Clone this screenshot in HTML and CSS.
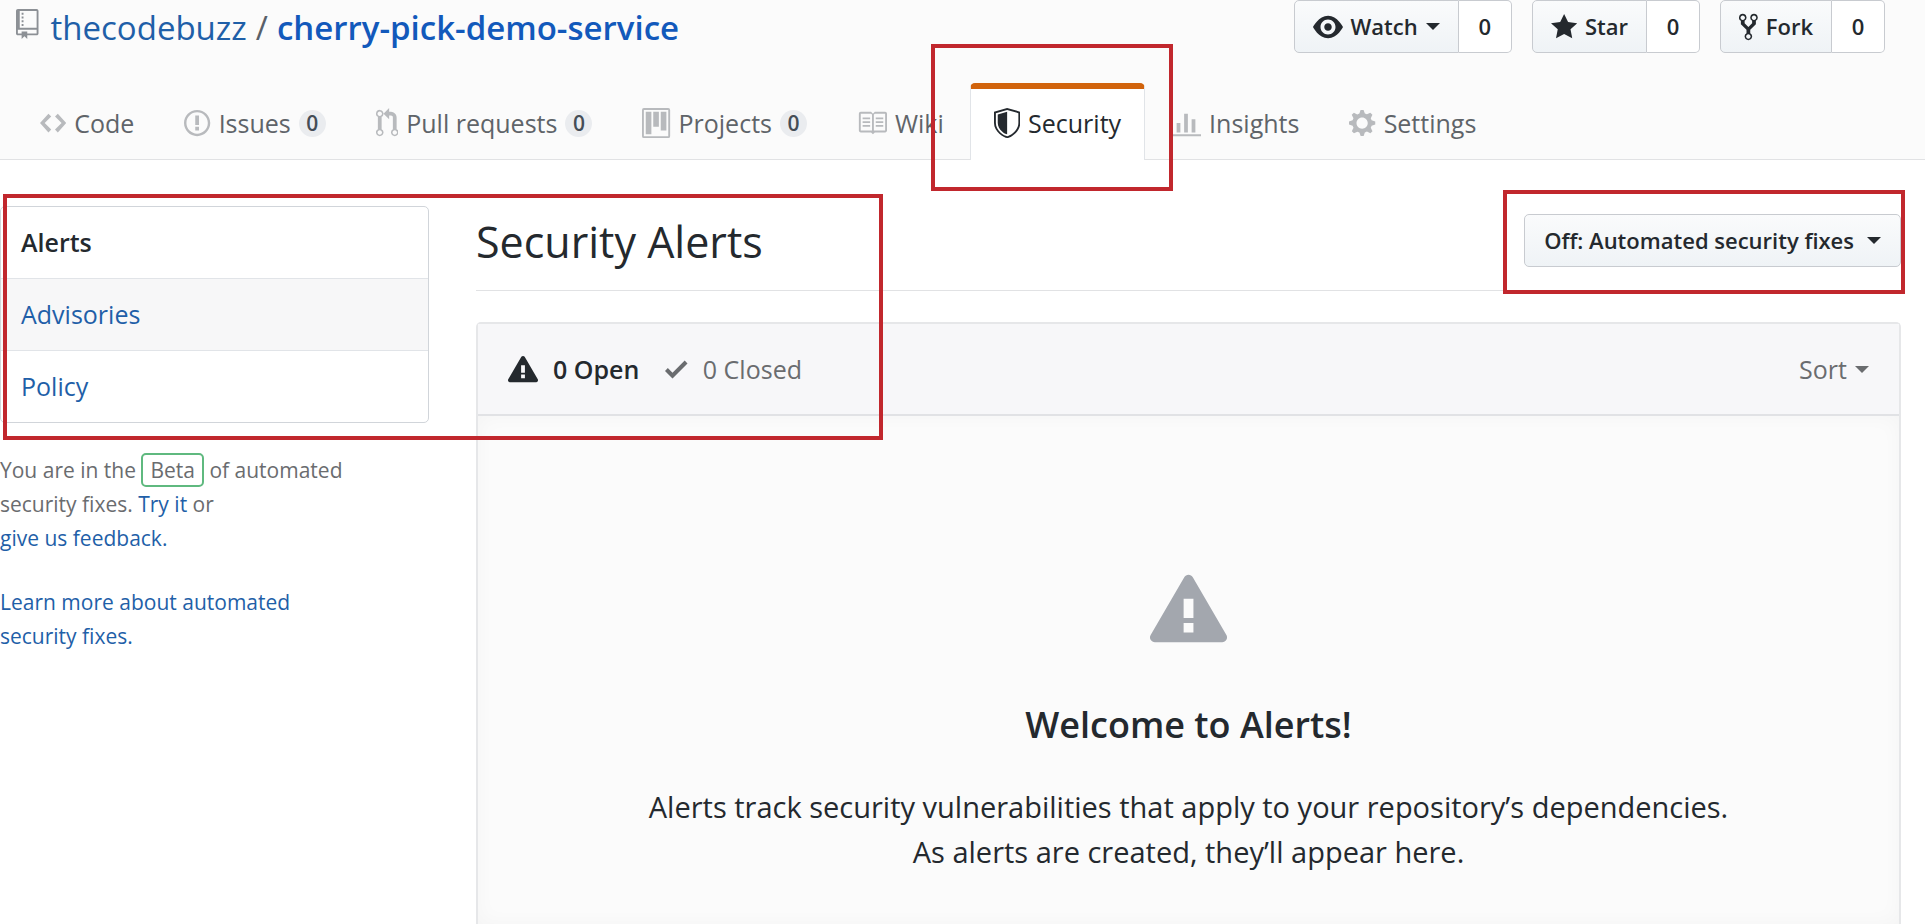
FILE: index.html
```html
<!DOCTYPE html>
<html lang="en">
<head>
<meta charset="utf-8">
<meta name="viewport" content="width=device-width, initial-scale=1">
<title>Security Alerts · thecodebuzz/cherry-pick-demo-service</title>
<link rel="stylesheet" href="styles.css">
</head>
<body>
<header class="repohead">
  <div class="repohead-top">
    <h1 class="repo-title">
      <svg class="icon repo-icon" viewBox="0 0 12 16" aria-hidden="true"><path fill-rule="evenodd" d="M4 9H3V8h1v1zm0-3H3v1h1V6zm0-2H3v1h1V4zm0-2H3v1h1V2zm8-1v12c0 .55-.45 1-1 1H6v2l-1.5-1.500L3 16v-2H1c-.55 0-1-.45-1-1V1c0-.55.45-1 1-1h10c.55 0 1 .45 1 1zm-1 10H1v2h2v-1h3v1h5v-2zm0-10H2v9h9V1z"/></svg>
      <a class="owner" href="#">thecodebuzz</a><span class="slash">/</span><a class="repo" href="#">cherry-pick-demo-service</a>
    </h1>
    <ul class="actions">
      <li class="action">
        <button class="btn" type="button">
          <svg class="icon" viewBox="0 0 16 16" aria-hidden="true"><path fill-rule="evenodd" d="M8.060 2C3 2 0 8 0 8s3 6 8.060 6C13 14 16 8 16 8s-3-6-7.940-6zM8 12c-2.200 0-4-1.780-4-4 0-2.200 1.800-4 4-4 2.220 0 4 1.800 4 4 0 2.220-1.780 4-4 4zm2-4c0 1.110-.89 2-2 2-1.110 0-2-.89-2-2 0-1.110.89-2 2-2 1.110 0 2 .89 2 2z"/></svg>
          Watch<span class="caret"></span>
        </button>
        <a class="count" href="#">0</a>
      </li>
      <li class="action">
        <button class="btn" type="button">
          <svg class="icon" viewBox="0 0 14 16" aria-hidden="true"><path d="M14 6l-4.900-.64L7 1 4.900 5.360 0 6l3.600 3.260L2.670 14 7 11.670 11.330 14l-.93-4.740L14 6z"/></svg>
          Star
        </button>
        <a class="count" href="#">0</a>
      </li>
      <li class="action">
        <button class="btn" type="button">
          <svg class="icon" viewBox="0 0 10 16" aria-hidden="true"><path fill-rule="evenodd" d="M8 1a1.993 1.993 0 0 0-1 3.720V6L5 8 3 6V4.720A1.993 1.993 0 0 0 2 1a1.993 1.993 0 0 0-1 3.720V6.500l3 3v1.780A1.993 1.993 0 0 0 5 15a1.993 1.993 0 0 0 1-3.720V9.500l3-3V4.720A1.993 1.993 0 0 0 8 1zM2 4.200C1.340 4.200.8 3.650.8 3c0-.65.55-1.200 1.200-1.200.65 0 1.200.55 1.200 1.200 0 .65-.55 1.200-1.200 1.200zm3 10c-.66 0-1.200-.55-1.200-1.200 0-.65.55-1.200 1.200-1.200.65 0 1.200.55 1.200 1.200 0 .65-.55 1.200-1.200 1.200zm3-10c-.66 0-1.200-.55-1.200-1.200 0-.65.55-1.200 1.200-1.200.65 0 1.200.55 1.200 1.200 0 .65-.55 1.200-1.200 1.200z"/></svg>
          Fork
        </button>
        <a class="count" href="#">0</a>
      </li>
    </ul>
  </div>
  <nav class="tabs" aria-label="Repository">
    <a class="tab" href="#"><svg class="icon" viewBox="0 0 14 16" aria-hidden="true"><path fill-rule="evenodd" d="M9.500 3L8 4.500 11.500 8 8 11.500 9.500 13 14 8 9.500 3zm-5 0L0 8l4.500 5L6 11.500 2.500 8 6 4.500 4.500 3z"/></svg>Code</a>
    <a class="tab" href="#"><svg class="icon" viewBox="0 0 14 16" aria-hidden="true"><path fill-rule="evenodd" d="M7 2.300c3.140 0 5.700 2.560 5.700 5.700s-2.560 5.700-5.700 5.700A5.710 5.710 0 0 1 1.300 8c0-3.140 2.560-5.700 5.700-5.700zM7 1C3.140 1 0 4.140 0 8s3.140 7 7 7 7-3.140 7-7-3.140-7-7-7zm1 3H6v5h2V4zm0 6H6v2h2v-2z"/></svg>Issues<span class="counter">0</span></a>
    <a class="tab" href="#"><svg class="icon" viewBox="0 0 12 16" aria-hidden="true"><path fill-rule="evenodd" d="M11 11.280V5c-.03-.78-.34-1.470-.94-2.060C9.460 2.350 8.780 2.030 8 2H7V0L4 3l3 3V4h1c.27.02.48.11.69.31.21.2.3.42.31.69v6.280A1.993 1.993 0 0 0 10 15a1.993 1.993 0 0 0 1-3.720zm-1 2.920c-.66 0-1.200-.55-1.200-1.200 0-.65.55-1.200 1.200-1.200.65 0 1.200.55 1.200 1.200 0 .65-.55 1.200-1.200 1.200zM4 3c0-1.110-.89-2-2-2a1.993 1.993 0 0 0-1 3.720v6.560A1.993 1.993 0 0 0 2 15a1.993 1.993 0 0 0 1-3.720V4.720c.59-.34 1-.98 1-1.720zm-.8 10c0 .66-.55 1.200-1.200 1.200-.65 0-1.200-.55-1.200-1.200 0-.65.55-1.200 1.200-1.200.65 0 1.200.55 1.200 1.200zM2 4.200C1.340 4.200.8 3.650.8 3c0-.65.55-1.200 1.200-1.200.65 0 1.200.55 1.200 1.200 0 .65-.55 1.200-1.200 1.200z"/></svg>Pull requests<span class="counter">0</span></a>
    <a class="tab" href="#"><svg class="icon" viewBox="0 0 15 16" aria-hidden="true"><path fill-rule="evenodd" d="M10 12h3V2h-3v10zm-4-2h3V2H6v8zm-4 4h3V2H2v12zm-1 1h13V1H1v14zM14 0H1a1 1 0 0 0-1 1v14a1 1 0 0 0 1 1h13a1 1 0 0 0 1-1V1a1 1 0 0 0-1-1z"/></svg>Projects<span class="counter">0</span></a>
    <a class="tab" href="#"><svg class="icon" viewBox="0 0 16 16" aria-hidden="true"><path fill-rule="evenodd" d="M3 5h4v1H3V5zm0 3h4V7H3v1zm0 2h4V9H3v1zm11-5h-4v1h4V5zm0 2h-4v1h4V7zm0 2h-4v1h4V9zm2-6v9c0 .55-.45 1-1 1H9.500l-1 1-1-1H2c-.55 0-1-.45-1-1V3c0-.55.45-1 1-1h5.500l1 1 1-1H15c.55 0 1 .45 1 1zm-8 .5L7.500 3H2v9h6V3.500zm7-.5H9.500l-.5.5V12h6V3z"/></svg>Wiki</a>
    <a class="tab selected" href="#" aria-current="page"><svg class="icon" viewBox="0 0 14 16" aria-hidden="true"><path fill-rule="evenodd" d="M0 2l7-2 7 2v6.020C14 12.690 8.690 16 7 16c-1.690 0-7-3.310-7-7.980V2zm1 .75L7 1l6 1.750v5.268C13 12.104 8.449 15 7 15c-1.449 0-6-2.896-6-6.982V2.750zm1 .75L7 2v12c-1.207 0-5-2.482-5-5.985V3.500z"/></svg>Security</a>
    <a class="tab" href="#"><svg class="icon" viewBox="0 0 16 16" aria-hidden="true"><path fill-rule="evenodd" d="M16 14v1H0V0h1v14h15zM5 13H3V8h2v5zm4 0H7V3h2v10zm4 0h-2V6h2v7z"/></svg>Insights</a>
    <a class="tab" href="#"><svg class="icon" viewBox="0 0 14 16" aria-hidden="true"><path fill-rule="evenodd" d="M14 8.770v-1.600l-1.940-.64-.45-1.090.88-1.840-1.130-1.130-1.810.91-1.090-.45-.69-1.920h-1.600l-.63 1.940-1.110.45-1.840-.88-1.130 1.130.91 1.810-.45 1.090L0 7.230v1.590l1.940.64.45 1.090-.88 1.840 1.130 1.130 1.810-.91 1.090.45.69 1.920h1.590l.63-1.940 1.110-.45 1.840.88 1.130-1.130-.92-1.810.47-1.090L14 8.750v.02zM7 11c-1.660 0-3-1.340-3-3s1.340-3 3-3 3 1.340 3 3-1.340 3-3 3z"/></svg>Settings</a>
  </nav>
</header>

<div class="layout">
  <aside class="side">
    <nav class="menu" aria-label="Security">
      <a class="menu-item current" href="#" aria-current="page">Alerts</a>
      <a class="menu-item hovered" href="#">Advisories</a>
      <a class="menu-item" href="#">Policy</a>
    </nav>
    <p class="note">You are in the <span class="beta">Beta</span> of automated<br>security fixes. <a href="#">Try it</a> or<br><a href="#">give us feedback.</a></p>
    <p class="note"><a href="#">Learn more about automated<br>security fixes.</a></p>
  </aside>

  <main class="main">
    <div class="subhead">
      <h2 class="subhead-title">Security Alerts</h2>
      <button class="btn btn-wide" type="button">Off: Automated security fixes<span class="caret"></span></button>
    </div>
    <section class="box">
      <div class="box-head">
        <a class="state open" href="#"><svg class="icon" viewBox="0 0 16 16" aria-hidden="true"><path fill-rule="evenodd" d="M8.893 1.500c-.183-.31-.52-.5-.887-.5s-.703.19-.886.5L.138 13.499a.98.98 0 0 0 0 1.001c.193.31.53.501.886.501h13.964c.367 0 .704-.19.877-.5a1.030 1.030 0 0 0 .01-1.002L8.893 1.500zm.133 11.497H6.987v-2.003h2.039v2.003zm0-3.004H6.987V5.987h2.039v4.006z"/></svg>0 Open</a>
        <a class="state" href="#"><svg class="icon" viewBox="0 0 12 16" aria-hidden="true"><path d="M12 5l-8 8-4-4 1.500-1.500L4 10l6.500-6.500L12 5z"/></svg>0 Closed</a>
        <button class="sort" type="button">Sort<span class="caret"></span></button>
      </div>
      <div class="blank">
        <svg class="blank-icon" viewBox="0 0 16 16" aria-hidden="true"><path fill-rule="evenodd" d="M8.893 1.500c-.183-.31-.52-.5-.887-.5s-.703.19-.886.5L.138 13.499a.98.98 0 0 0 0 1.001c.193.31.53.501.886.501h13.964c.367 0 .704-.19.877-.5a1.030 1.030 0 0 0 .01-1.002L8.893 1.500zm.133 11.497H6.987v-2.003h2.039v2.003zm0-3.004H6.987V5.987h2.039v4.006z"/></svg>
        <h3 class="blank-title">Welcome to Alerts!</h3>
        <p class="blank-text">Alerts track security vulnerabilities that apply to your repository’s dependencies.<br>As alerts are created, they’ll appear here.</p>
      </div>
    </section>
  </main>
</div>

<div class="mark mark-tab"></div>
<div class="mark mark-list"></div>
<div class="mark mark-fixes"></div>
</body>
</html>
```

FILE: styles.css
```css
*,
*::before,
*::after {
  box-sizing: border-box;
}

body {
  position: relative;
  display: flex;
  flex-direction: column;
  min-height: 100vh;
  margin: 0;
  background: #fff;
  color: #24292e;
  font-family: "Open Sans", "Noto Sans", sans-serif;
  font-size: 25px;
  line-height: 35px;
}

h1, h2, h3, p, ul {
  margin: 0;
  padding: 0;
}

a {
  color: #1f5fa8;
  text-decoration: none;
}

button {
  font: inherit;
  color: inherit;
  cursor: pointer;
}

.icon {
  display: block;
  flex: none;
  height: 30px;
  fill: currentColor;
}

.caret {
  flex: none;
  border: 7px solid transparent;
  border-top-color: currentColor;
  border-bottom: 0;
}

/* Repository header */
.repohead {
  background: #fbfbfb;
  border-bottom: 1px solid #e1e2e4;
}

.repohead-top {
  display: flex;
  justify-content: space-between;
  align-items: flex-start;
  padding: 0 40px 0 16px;
}

.repo-title {
  display: flex;
  align-items: center;
  height: 54px;
  font-size: 33px;
  font-weight: 400;
}

.repo-icon {
  margin-right: 12px;
  align-self: flex-start;
  margin-top: 9px;
  color: #8c9095;
}

.slash {
  margin: 0 9px;
  color: #586069;
}

.repo {
  color: #1259bb;
  font-weight: 600;
}

.actions {
  display: flex;
  gap: 20px;
  list-style: none;
}

.action {
  display: flex;
}

.btn {
  display: flex;
  align-items: center;
  gap: 8px;
  height: 53px;
  padding: 0 18px;
  border: 1px solid #c8cbd0;
  border-radius: 5px;
  background: linear-gradient(#fafbfc, #eff3f6);
  font-size: 22px;
  font-weight: 600;
  white-space: nowrap;
}

.action .btn {
  border-radius: 5px 0 0 5px;
}

.count {
  display: flex;
  align-items: center;
  justify-content: center;
  width: 53px;
  border: 1px solid #c8cbd0;
  border-left: 0;
  border-radius: 0 5px 5px 0;
  background: #fff;
  color: #24292e;
  font-size: 22px;
  font-weight: 600;
}

/* Tabs */
.tabs {
  display: flex;
  gap: 2px;
  margin-bottom: -1px;
  padding: 29px 16px 0;
}

.tab {
  display: flex;
  align-items: center;
  gap: 8px;
  height: 77px;
  padding: 0 23px 3px;
  border: 1px solid transparent;
  border-top: 6px solid transparent;
  border-bottom: 0;
  border-radius: 5px 5px 0 0;
  color: #5f6469;
  white-space: nowrap;
}

.tab .icon {
  color: #b8babd;
}

.tab.selected {
  border-color: #d1630c #e1e4e8 transparent;
  background: #fff;
  color: #24292e;
}

.tab.selected .icon {
  color: #24292e;
}

.counter {
  width: 27px;
  height: 27px;
  border-radius: 14px;
  background: #eaecef;
  color: #444d56;
  font-size: 21px;
  font-weight: 600;
  line-height: 27px;
  text-align: center;
}

/* Page columns */
.layout {
  display: flex;
  flex: 1;
  gap: 47px;
  padding-right: 24px;
}

.side {
  flex: none;
  width: 429px;
  padding-top: 46px;
}

.menu {
  margin-bottom: 30px;
  border: 1px solid #d1d5da;
  border-radius: 5px;
}

.menu-item {
  display: block;
  padding: 18px 20px;
}

.menu-item + .menu-item {
  border-top: 1px solid #e1e4e8;
}

.menu-item.current {
  color: #24292e;
  font-weight: 600;
}

.menu-item.hovered {
  background: #f7f7f8;
}

.note {
  margin-bottom: 30px;
  color: #6a6c6f;
  font-size: 21px;
  line-height: 34px;
}

.beta {
  padding: 1px 7px;
  border: 2px solid #5fb97f;
  border-radius: 5px;
}

.main {
  display: flex;
  flex: 1;
  flex-direction: column;
  padding-top: 46px;
}

.subhead {
  display: flex;
  justify-content: space-between;
  align-items: flex-start;
  height: 85px;
  padding-top: 8px;
  border-bottom: 1px solid #e1e2e4;
}

.subhead-title {
  font-size: 43px;
  font-weight: 400;
  line-height: 56px;
}

.btn-wide {
  gap: 13px;
  padding: 0 19px;
}

.box {
  display: flex;
  flex: 1;
  flex-direction: column;
  margin-top: 31px;
  border: 2px solid #e6e7e9;
  border-bottom: 0;
  border-radius: 5px 5px 0 0;
  background: #fbfbfb;
}

.box-head {
  display: flex;
  align-items: center;
  gap: 26px;
  height: 92px;
  padding: 0 30px;
  border-bottom: 2px solid #e1e2e5;
  background: #f7f7f9;
}

.state {
  display: flex;
  align-items: center;
  gap: 15px;
  color: #6a6c6f;
}

.state.open {
  color: #24292e;
  font-weight: 600;
}

.sort {
  display: flex;
  align-items: center;
  gap: 8px;
  margin-left: auto;
  padding: 0;
  border: 0;
  background: none;
  color: #6a6c6f;
}

.blank {
  padding: 154px 40px 40px;
  box-shadow: inset 0 0 20px rgba(27, 31, 35, 0.03);
  flex: 1;
  text-align: center;
}

.blank-icon {
  display: block;
  width: 77px;
  height: 77px;
  margin: 0 auto 54px;
  fill: #a3a7ae;
}

.blank-title {
  margin-bottom: 35px;
  font-size: 36px;
  font-weight: 600;
  line-height: 48px;
}

.blank-text {
  font-size: 29px;
  line-height: 45px;
}

/* Highlight frames drawn over the page */
.mark {
  position: absolute;
  border: 4px solid #c1272d;
  pointer-events: none;
}

.mark-tab {
  top: 44px;
  left: 931px;
  width: 242px;
  height: 147px;
}

.mark-list {
  top: 194px;
  left: 3px;
  width: 880px;
  height: 246px;
}

.mark-fixes {
  top: 190px;
  left: 1503px;
  width: 402px;
  height: 104px;
}
```
